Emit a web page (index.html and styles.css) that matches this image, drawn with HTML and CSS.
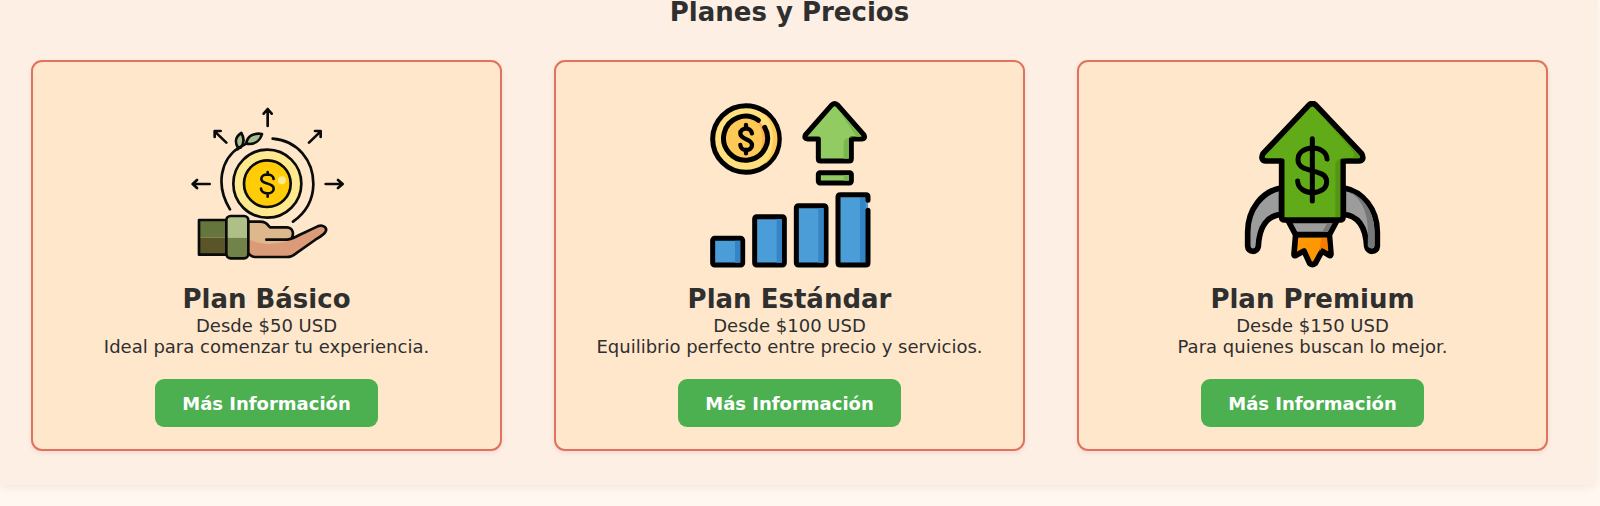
FILE: index.html
```html
<!DOCTYPE html>
<html lang="es">
<head>
<meta charset="utf-8">
<meta name="viewport" content="width=device-width, initial-scale=1">
<title>Planes y Precios</title>
<link rel="stylesheet" href="styles.css">
</head>
<body>
<section class="plans">
  <h2 class="plans-title">Planes y Precios</h2>
  <div class="plans-grid">
    <article class="card">
      <svg class="card-icon" viewBox="-12 17 540 504" fill="none" stroke="#0b0b0b" stroke-width="8" stroke-linecap="round" stroke-linejoin="round" aria-hidden="true">
        <path d="M260 92V42M248 55l12-14 12 14M136 142l-35-34M101 125v-18h18M384 142l35-34M402 107h17v18M86 266H36M48 254l-13 12 13 12M434 266h50M471 254l14 12-14 12"/>
        <path d="M147 342C103 270 118 192 176 155M275 130C350 136 398 196 397 268C396 312 374 352 336 379"/>
        <path fill="#a9bf8c" d="M170 155C160 138 166 122 181 113C191 130 190 144 179 157zM196 145C198 122 218 112 243 116C237 137 220 149 196 145z"/>
        <path d="M170 162C178 154 186 150 196 145"/>
        <circle cx="259" cy="265" r="102" fill="#ffe98f"/>
        <circle cx="259" cy="265" r="70" fill="#ffcc05"/>
        <circle cx="303" cy="255" r="12" fill="#ffe98f" stroke="none"/>
        <path d="M278 251C276 233 241 233 241 251C241 269 278 260 278 280C278 299 241 299 240 280M260 230v8M260 294v10"/>
        <path fill="#65763c" stroke="none" d="M54 373h82v54H54z"/>
        <path fill="#5a5528" stroke="none" d="M54 427h82v51H54z"/>
        <path fill="#dfb78d" stroke="none" d="M202 379H236C254 379 260 386 268 396H318C336 397 340 416 331 430L336 431 410 393C425 386 439 397 434 410C400 430 360 457 326 485H222L202 474z"/>
        <path fill="#dc9b78" stroke="none" d="M202 431C240 451 285 449 330 434L410 398C423 391 437 398 434 410C399 434 363 458 326 485H222L202 474z"/>
        <path d="M136 374H54V478H136M202 379H236C254 379 258 386 267 396H318C336 397 340 416 331 430M256 433H318C334 431 341 427 355 419L410 393C426 386 441 398 433 410C427 420 412 427 402 434L344 475Q332 485 318 485H222Q212 485 202 474"/>
        <path fill="#aec088" stroke="none" d="M136 427V374Q136 362 148 362H190Q202 362 202 374V427z"/>
        <path fill="#718348" stroke="none" d="M136 427H202V477Q202 489 190 489H148Q136 489 136 477z"/>
        <rect x="136" y="362" width="66" height="127" rx="13"/>
      </svg>
      <h3 class="card-title">Plan Básico</h3>
      <p class="card-text">Desde $50 USD</p>
      <p class="card-text">Ideal para comenzar tu experiencia.</p>
      <button class="card-button" type="button">Más Información</button>
    </article>

    <article class="card">
      <svg class="card-icon" viewBox="-3 32 540 504" fill="none" stroke="#000" stroke-width="15" stroke-linecap="round" stroke-linejoin="round" aria-hidden="true">
        <circle cx="135" cy="146" r="100" fill="#ffe07d"/>
        <path stroke="none" fill="#ffc957" d="M190 70A93 93 0 0 1 190 222Q216 192 216 146T190 70z"/>
        <circle cx="135" cy="146" r="66" fill="#ffc957" stroke="none"/>
        <path stroke="none" fill="#ffad4e" d="M165 88A66 66 0 0 1 165 205Q184 177 184 146T165 88z"/>
        <path d="M172 90A66 66 0 1 0 191 111"/>
        <path stroke-width="13" d="M153 129C150 109 118 111 118 129C118 150 153 143 153 164C153 184 119 184 118 164M135 104v11M135 178v11"/>
        <path fill="#91cb61" d="M393 43Q401 37 409 43L489 134Q494 145 483 146H451V205Q451 212 444 212H359Q352 212 352 205V146H320Q308 145 313 134z"/>
        <path stroke="none" fill="#78b94f" d="M412 58L480 139H443V205H428V158Q428 145 441 143L466 138z"/>
        <rect x="352" y="247" width="99" height="31" rx="5" fill="#91cb61"/>
        <path stroke="none" fill="#78b94f" d="M428 254h16v17h-16z"/>
        <g fill="#4b9dd8">
          <rect x="35" y="444" width="90" height="80" rx="6"/>
          <rect x="161" y="379" width="89" height="145" rx="6"/>
          <rect x="286" y="346" width="89" height="178" rx="6"/>
          <path stroke="none" d="M411 314h90v210h-90z"/>
        </g>
        <path stroke="none" fill="#3584c5" d="M102 451h16v66h-16zM227 386h16v131h-16zM352 353h16v164h-16zM477 321h17v196h-17z"/>
        <path d="M501 330V319Q501 313 495 313H418Q411 313 411 320V517Q411 524 418 524H494Q501 524 501 517V360"/>
      </svg>
      <h3 class="card-title">Plan Estándar</h3>
      <p class="card-text">Desde $100 USD</p>
      <p class="card-text">Equilibrio perfecto entre precio y servicios.</p>
      <button class="card-button" type="button">Más Información</button>
    </article>

    <article class="card">
      <svg class="card-icon" viewBox="-7 32 540 504" fill="none" stroke="#000" stroke-width="17" stroke-linecap="round" stroke-linejoin="round" aria-hidden="true">
        <path fill="#9c9c9c" d="M169 292C110 303 67 357 67 425V467C68 488 96 488 99 468C102 410 125 375 169 372zM354 292C413 303 456 357 456 425V467C455 488 427 488 424 468C421 410 398 375 354 372z"/>
        <path stroke="none" fill="#777" d="M375 306C422 337 432 390 427 466C432 479 449 475 448 463V425C448 366 416 322 375 306z"/>
        <path fill="#ff9800" d="M211 432H312L317 491Q316 500 308 493L290 482L270 519Q261 526 253 519L236 482L215 493Q206 500 206 491z"/>
        <path stroke="none" fill="#f57c00" d="M288 440h17l4 42-19-10-8 12z"/>
        <path fill="#9c9c9c" d="M188 390H335L315 428Q312 433 305 433H218Q211 433 208 428z"/>
        <path stroke="none" fill="#777" d="M306 399h16l-15 26h-17z"/>
        <path fill="#61ab18" d="M252 43Q261 36 270 43L409 190Q419 211 400 212H353V380Q353 389 344 389H178Q169 389 169 380V212H122Q104 210 113 190z"/>
        <path stroke="none" fill="#559714" d="M276 61L404 198Q403 204 398 204H345V380H330V224Q330 212 342 206L374 204Q394 200 384 184z"/>
        <path stroke-width="15" d="M261 145V332M305 206C303 162 218 162 218 208C218 252 304 231 304 274C304 318 218 318 217 272"/>
      </svg>
      <h3 class="card-title">Plan Premium</h3>
      <p class="card-text">Desde $150 USD</p>
      <p class="card-text">Para quienes buscan lo mejor.</p>
      <button class="card-button" type="button">Más Información</button>
    </article>
  </div>
</section>
</body>
</html>
```
FILE: styles.css
```css
* {
  box-sizing: border-box;
}

body {
  margin: 0;
  background: #fff7f0;
  color: #2f2f2f;
  font-family: Verdana, "DejaVu Sans", sans-serif;
  font-size: 18px;
  line-height: 21px;
}

h2,
h3,
p {
  margin: 0;
}

.plans {
  display: flow-root;
  margin: 0 3px 21px 0;
  padding: 0 49px 34px 31px;
  background: #feefe4;
  border-radius: 0 0 10px 0;
  box-shadow: 0 4px 8px rgba(0, 0, 0, 0.05);
}

.plans-title {
  margin: -4px 0 32px;
  font-size: 26px;
  line-height: 32px;
  text-align: center;
}

.plans-grid {
  display: grid;
  grid-template-columns: repeat(3, 1fr);
  gap: 52px;
}

.card {
  display: flex;
  flex-direction: column;
  align-items: center;
  padding: 39px 22px 22px;
  text-align: center;
  background: #ffe7cc;
  border: 2px solid #e2725b;
  border-radius: 11px;
  box-shadow: 0 2px 5px rgba(0, 0, 0, 0.08);
}

.card-icon {
  width: 180px;
  height: 168px;
  margin-bottom: 15px;
}

.card-title {
  font-size: 26px;
  line-height: 31px;
}

.card-button {
  margin-top: 22px;
  padding: 0 27px;
  height: 48px;
  border: 0;
  border-radius: 9px;
  background: #4caf50;
  color: #fff;
  font: inherit;
  font-weight: bold;
  cursor: pointer;
}
```
